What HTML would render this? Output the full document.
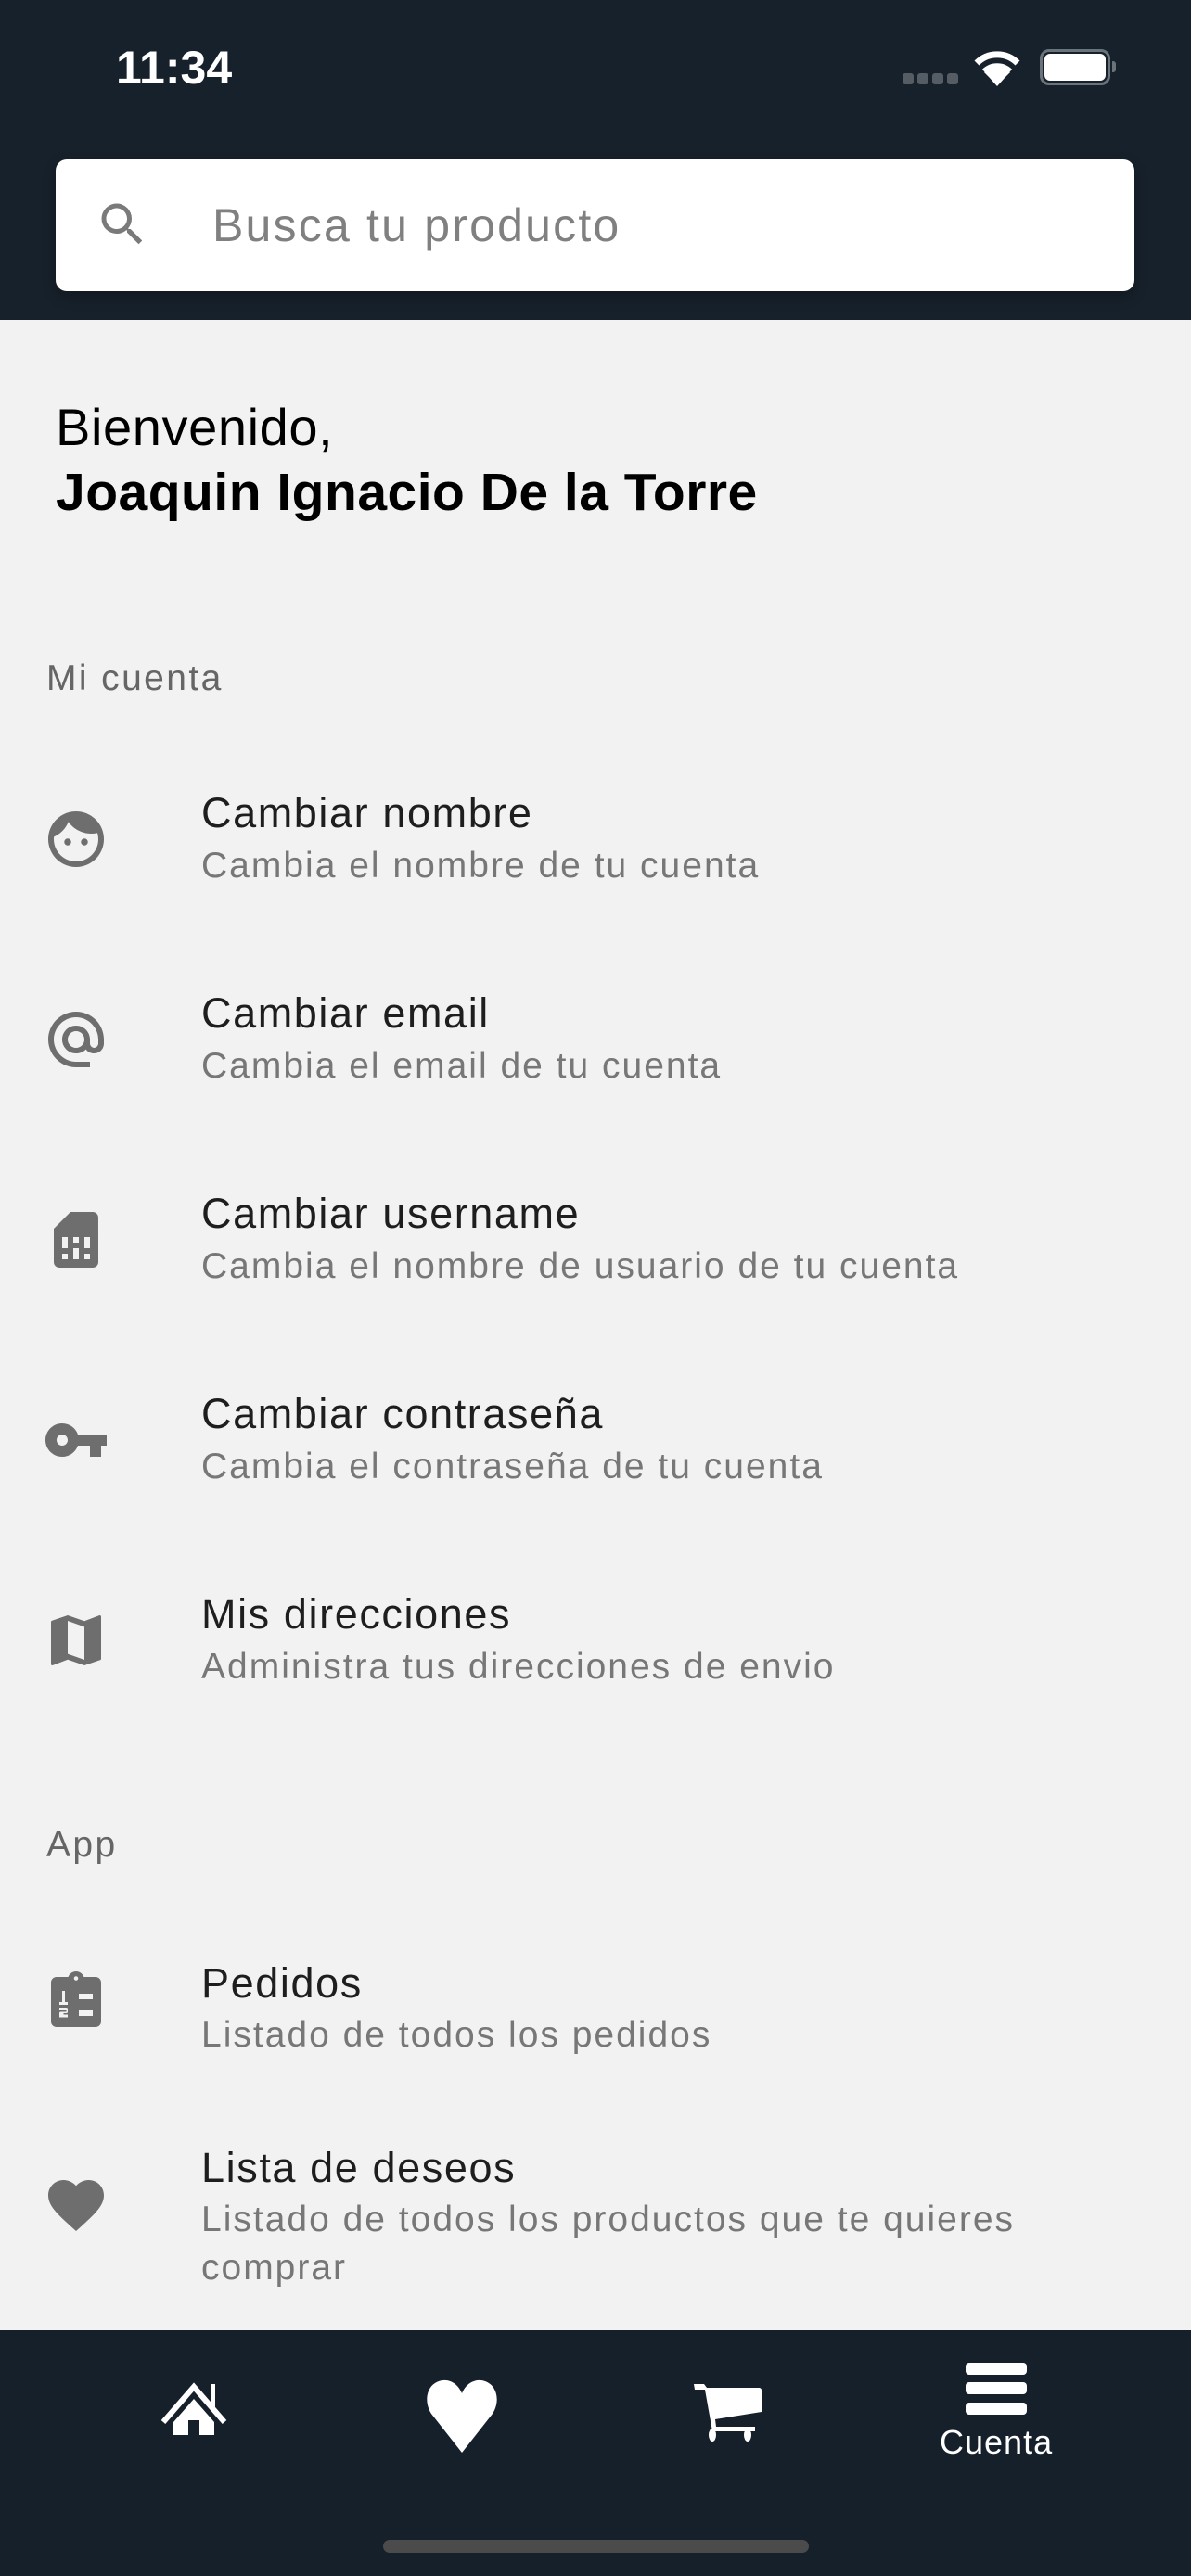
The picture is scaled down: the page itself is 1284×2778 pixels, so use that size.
<!DOCTYPE html>
<html><head><meta charset="utf-8"><style>
*{margin:0;padding:0;box-sizing:border-box}
body{width:1284px;height:2778px;background:#f2f2f2;font-family:"Liberation Sans",sans-serif;position:relative;overflow:hidden}
.hdr{position:absolute;left:0;top:0;width:1284px;height:345px;background:#17212b}
.time{position:absolute;left:125px;top:44px;color:#fff;font-size:50px;font-weight:bold;letter-spacing:0px}
.search{position:absolute;left:60px;top:172px;width:1163px;height:142px;background:#fff;border-radius:12px;box-shadow:0 6px 14px rgba(0,0,0,.25)}
.search .ph{position:absolute;left:169px;top:42px;font-size:50px;color:#808080;letter-spacing:2.2px}
.t{position:absolute;white-space:nowrap}
.sec{position:absolute;left:50px;font-size:39px;color:#666;letter-spacing:2.4px}
.it{position:absolute;left:0;width:1284px}
.it svg{position:absolute;left:46px;width:72px;height:72px;fill:#6e6e6e}
.it .a{position:absolute;left:217px;font-size:45px;color:#1e1e1e;white-space:nowrap;letter-spacing:1.6px}
.it .b{position:absolute;left:217px;font-size:39px;color:#777;line-height:52px;width:1000px;letter-spacing:2px}
.nav{position:absolute;left:0;top:2513px;width:1284px;height:265px;background:#16202a}
.nav svg{position:absolute;fill:#fff}
</style></head><body>
<div class="hdr">
 <div class="time">11:34</div>
 <div style="position:absolute;left:973px;top:79px;width:12px;height:12px;border-radius:3px;background:#555c63"></div>
 <div style="position:absolute;left:989px;top:79px;width:12px;height:12px;border-radius:3px;background:#555c63"></div>
 <div style="position:absolute;left:1005px;top:79px;width:12px;height:12px;border-radius:3px;background:#555c63"></div>
 <div style="position:absolute;left:1021px;top:79px;width:12px;height:12px;border-radius:3px;background:#555c63"></div>
 <svg style="position:absolute;left:1049px;top:53px" width="52" height="40" viewBox="0 0 52 40"><path d="M26 40L17 30A13 13 0 0 1 35 30Z M12 25A20 20 0 0 1 40 25L35 30A13 13 0 0 0 17 30Z" fill="#fff"/><path d="M4 15A31 31 0 0 1 48 15" stroke="#fff" stroke-width="7" fill="none"/><path d="M12 24A20 20 0 0 1 40 24" stroke="#fff" stroke-width="6" fill="none"/></svg>
 <div style="position:absolute;left:1121px;top:53px;width:76px;height:39px;border:3px solid #6b737a;border-radius:10px"></div>
 <div style="position:absolute;left:1126px;top:58px;width:66px;height:29px;background:#fff;border-radius:6px"></div>
 <div style="position:absolute;left:1199px;top:66px;width:4px;height:12px;background:#6b737a;border-radius:0 3px 3px 0"></div>
 <div class="search">
  <svg style="position:absolute;left:42px;top:40px" width="60" height="60" viewBox="0 0 24 24"><path fill="#7a7a7a" d="M15.5 14h-.79l-.28-.27A6.47 6.47 0 0 0 16 9.5 6.5 6.5 0 1 0 9.5 16c1.61 0 3.09-.59 4.230-1.57l.27.28v.79l5 4.990L20.49 19l-4.99-5zm-6 0C7.01 14 5 11.99 5 9.5S7.01 5 9.5 5 14 7.01 14 9.5 11.99 14 9.5 14z"/></svg>
  <div class="ph">Busca tu producto</div>
 </div>
</div>
<div class="t" style="left:60px;top:428px;font-size:56px;color:#000;letter-spacing:0.6px">Bienvenido,</div>
<div class="t" style="left:60px;top:498px;font-size:57px;color:#000;font-weight:bold;letter-spacing:0.5px">Joaquin Ignacio De la Torre</div>
<div class="sec" style="top:710px">Mi cuenta</div>

<div class="it" style="top:905px">
 <svg style="top:-36px" viewBox="0 0 24 24"><path d="M9 11.75a1.25 1.25 0 1 0 0 2.5 1.25 1.25 0 0 0 0-2.5zm6 0a1.25 1.25 0 1 0 0 2.5 1.25 1.25 0 0 0 0-2.5zM12 2C6.48 2 2 6.48 2 12s4.48 10 10 10 10-4.48 10-10S17.52 2 12 2zm0 18c-4.41 0-8-3.59-8-8 0-.29.02-.58.05-.86 2.36-1.05 4.23-2.98 5.21-5.37a9.97 9.970 0 0 0 10.41 3.97c.21.71.33 1.47.33 2.26 0 4.41-3.59 8-8 8z"/></svg>
 <div class="a" style="top:-54px">Cambiar nombre</div>
 <div class="b" style="top:3px">Cambia el nombre de tu cuenta</div>
</div>
<div class="it" style="top:1121px">
 <svg style="top:-36px" viewBox="0 0 24 24"><path d="M12 2C6.48 2 2 6.48 2 12s4.48 10 10 10h5v-2h-5c-4.34 0-8-3.66-8-8s3.66-8 8-8 8 3.66 8 8v1.43c0 .79-.71 1.57-1.5 1.57s-1.5-.78-1.5-1.57V12c0-2.76-2.24-5-5-5s-5 2.24-5 5 2.24 5 5 5c1.38 0 2.64-.56 3.54-1.47.65.89 1.77 1.47 2.96 1.470 1.97 0 3.5-1.6 3.5-3.57V12c0-5.52-4.48-10-10-10zm0 13c-1.66 0-3-1.34-3-3s1.34-3 3-3 3 1.34 3 3-1.34 3-3 3z"/></svg>
 <div class="a" style="top:-54px">Cambiar email</div>
 <div class="b" style="top:3px">Cambia el email de tu cuenta</div>
</div>
<div class="it" style="top:1337px">
 <svg style="top:-36px" viewBox="0 0 24 24"><path d="M19.99 4c0-1.1-.89-2-1.99-2h-8L4 8v12c0 1.1.9 2 2 2h12.01c1.1 0 1.99-.9 1.99-2l-.01-16zM9 19H7v-2h2v2zm8 0h-2v-2h2v2zm-8-4H7v-4h2v4zm4 4h-2v-4h2v4zm0-6h-2v-2h2v2zm4 2h-2v-4h2v4z"/></svg>
 <div class="a" style="top:-54px">Cambiar username</div>
 <div class="b" style="top:3px">Cambia el nombre de usuario de tu cuenta</div>
</div>
<div class="it" style="top:1553px">
 <svg style="top:-36px" viewBox="0 0 24 24"><path d="M12.65 10A5.99 5.99 0 0 0 7 6c-3.31 0-6 2.69-6 6s2.69 6 6 6a5.99 5.99 0 0 0 5.65-4H17v4h4v-4h2v-4H12.65zM7 14c-1.1 0-2-.9-2-2s.9-2 2-2 2 .9 2 2-.9 2-2 2z"/></svg>
 <div class="a" style="top:-54px">Cambiar contraseña</div>
 <div class="b" style="top:3px">Cambia el contraseña de tu cuenta</div>
</div>
<div class="it" style="top:1769px">
 <svg style="top:-36px" viewBox="0 0 24 24"><path d="M20.5 3l-.16.03L15 5.1 9 3 3.36 4.9c-.21.07-.36.25-.36.48V20.5c0 .28.22.5.5.5l.16-.03L9 18.9l6 2.1 5.64-1.9c.21-.07.36-.25.36-.48V3.5c0-.28-.22-.5-.5-.5zM15 19l-6-2.11V5l6 2.11V19z"/></svg>
 <div class="a" style="top:-54px">Mis direcciones</div>
 <div class="b" style="top:3px">Administra tus direcciones de envio</div>
</div>

<div class="sec" style="top:1968px">App</div>

<div class="it" style="top:2159px">
 <svg style="top:-36px" viewBox="0 0 24 24"><path d="M19 3h-4.18C14.4 1.84 13.3 1 12 1s-2.4.84-2.82 2H5c-1.1 0-2 .9-2 2v14c0 1.1.9 2 2 2h14c1.1 0 2-.9 2-2V5c0-1.1-.9-2-2-2zm-7-.25c.41 0 .75.34.75.75s-.34.75-.75.75-.75-.34-.75-.75.34-.75.75-.75zM13 9h5v2h-5zm0 6h5v2h-5zM7 8h1v4h1v1H6v-1h1zm-.5 7.5h2v-.5H6v-1h2.5c.28 0 .5.22.5.5v1c0 .28-.22.5-.5.5h-1v.5H9v1H6v-1.5c0-.28.22-.5.5-.5z"/></svg>
 <div class="a" style="top:-46px">Pedidos</div>
 <div class="b" style="top:10px">Listado de todos los pedidos</div>
</div>
<div class="it" style="top:2378px">
 <svg style="top:-36px" viewBox="0 0 24 24"><path d="M12 21.35l-1.45-1.32C5.4 15.36 2 12.28 2 8.5 2 5.42 4.42 3 7.5 3c1.74 0 3.41.81 4.5 2.09C13.09 3.81 14.76 3 16.5 3 19.58 3 22 5.42 22 8.5c0 3.78-3.4 6.86-8.55 11.54L12 21.35z"/></svg>
 <div class="a" style="top:-66px">Lista de deseos</div>
 <div class="b" style="top:-10px;width:900px">Listado de todos los productos que te quieres comprar</div>
</div>

<div class="nav">
 <svg style="left:173px;top:55px" width="72" height="58" viewBox="0 0 72 58"><path d="M3 44L36 6 69 44" stroke="#fff" stroke-width="6" fill="none" stroke-linejoin="miter"/><rect x="54" y="3" width="5" height="26"/><path d="M14 44L36 19 58 44V58H42V42H30V58H14Z"/></svg>
 <svg style="left:459px;top:52px" width="78" height="80" viewBox="0 0 78 80"><path d="M39 80L6 38C-2 26 0 8 14 3 25 -1 35 6 39 16 43 6 53 -1 64 3 78 8 80 26 72 38Z"/></svg>
 <svg style="left:748px;top:58px" width="74" height="62" viewBox="0 0 74 62"><path d="M0 0h11l3 4h56c2 0 3 1 3 3v23l-50 8 1 8h42v5H20L12 6H1Z"/><ellipse cx="20" cy="55" rx="4" ry="7"/><ellipse cx="58" cy="55" rx="4" ry="7"/></svg>
 <svg style="left:1041px;top:35px" width="66" height="56" viewBox="0 0 66 56"><rect x="0" y="0" width="66" height="13" rx="4"/><rect x="0" y="21" width="66" height="13" rx="4"/><rect x="0" y="43" width="66" height="13" rx="4"/></svg>
 <div class="t" style="left:1013px;top:100px;font-size:36px;color:#fff;letter-spacing:1px">Cuenta</div>
 <div style="position:absolute;left:413px;top:226px;width:459px;height:14px;border-radius:7px;background:#4b4b4b"></div>
</div>
</body></html>
